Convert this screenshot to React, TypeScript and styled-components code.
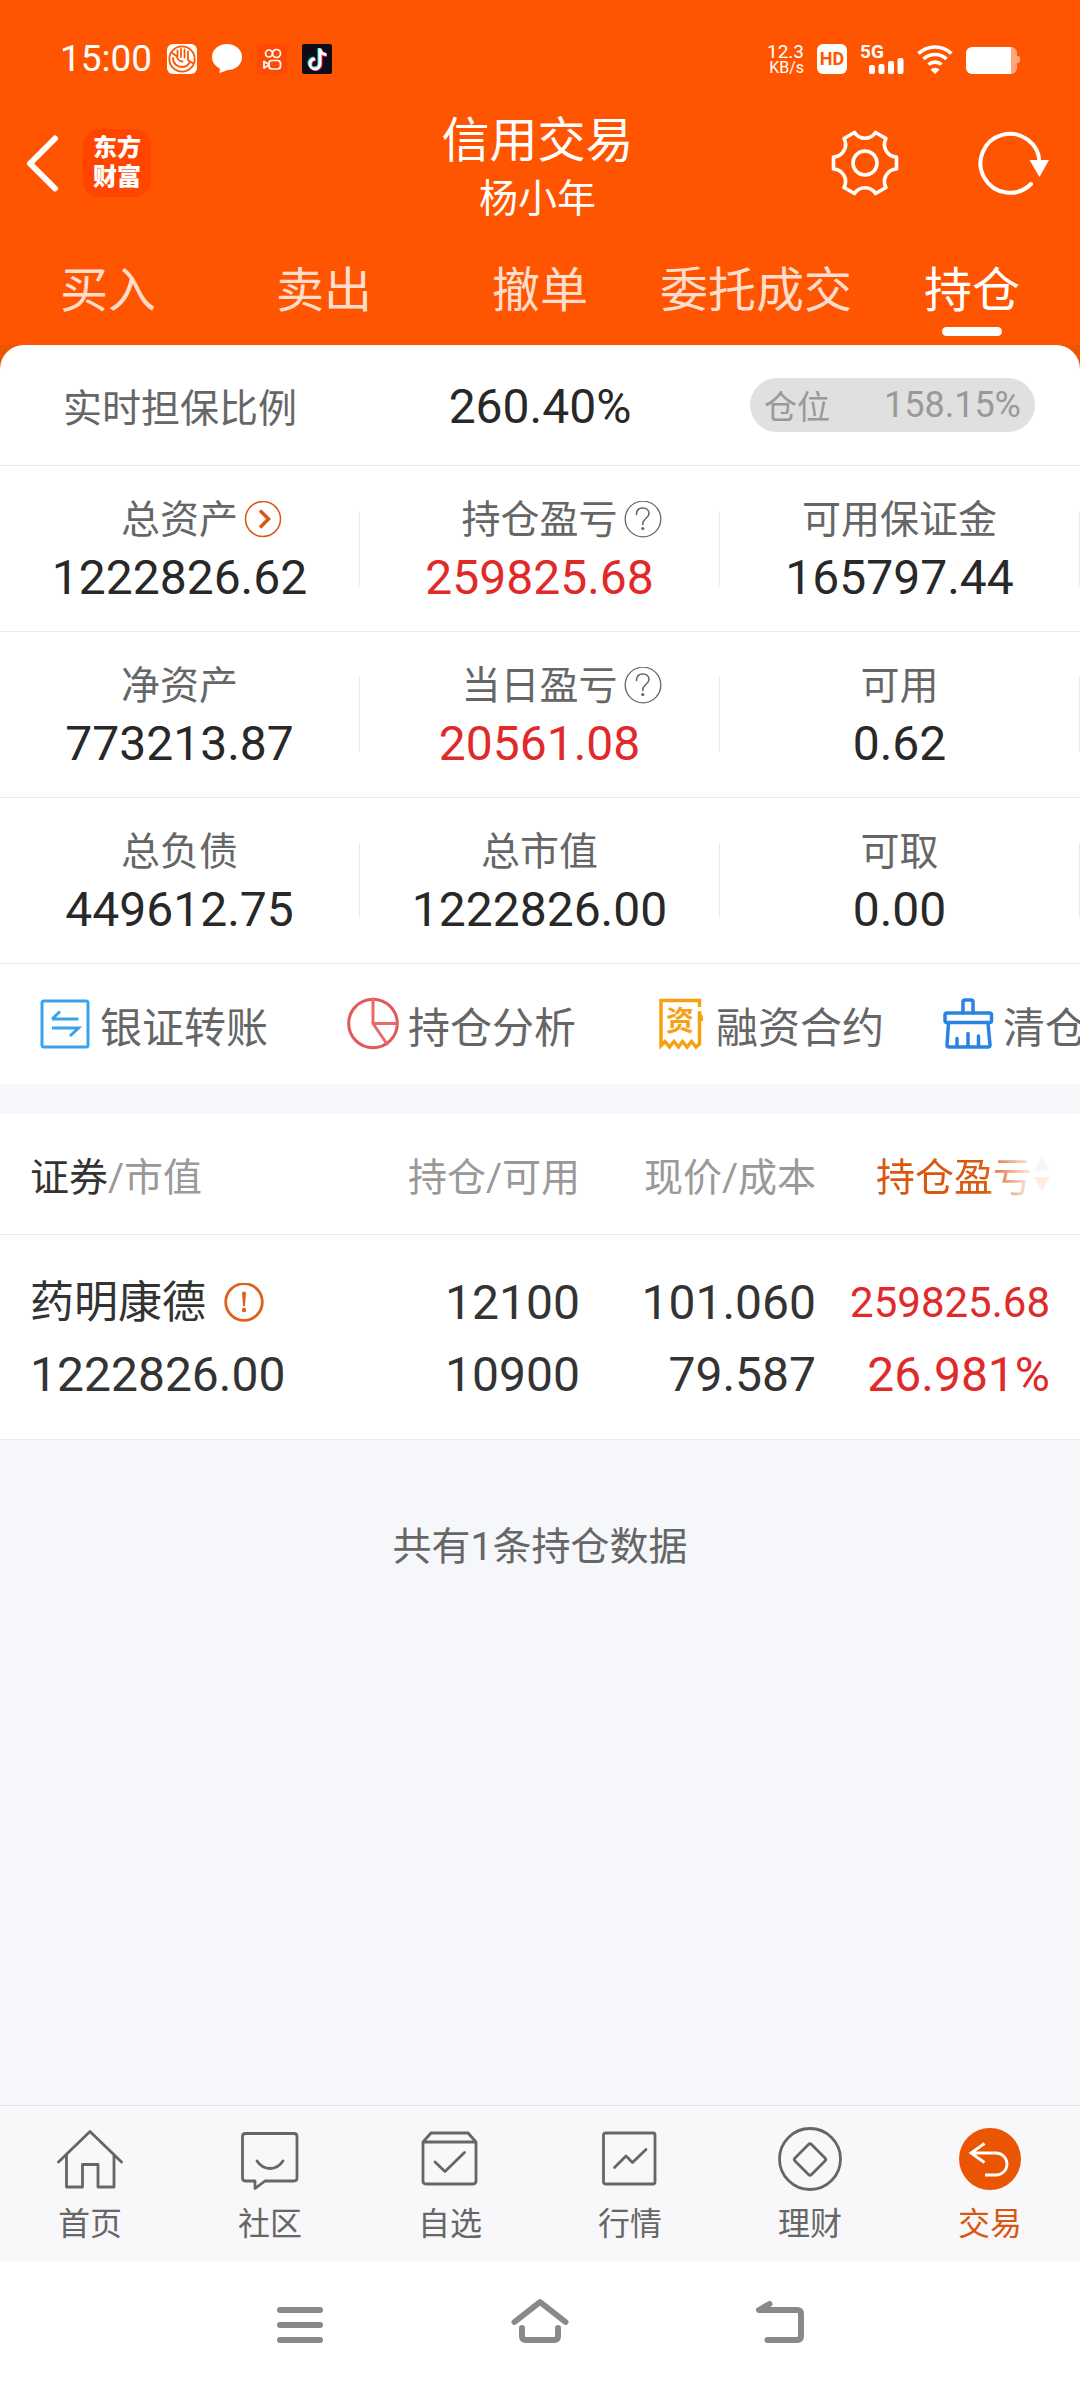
import React from "react";
import styled, { createGlobalStyle } from "styled-components";

const color = {
  brand: "#ff5500",
  brandDeep: "#ea5504",
  accent: "#d9580f",
  rise: "#e02a2a",
  ink: "#282828",
  text: "#333333",
  label: "#666666",
  muted: "#999999",
  line: "#ebebeb",
  page: "#f6f7fa",
};

const GlobalStyle = createGlobalStyle`
  * { box-sizing: border-box; }
  body {
    margin: 0;
    background: ${color.page};
    font-family: Roboto, "Noto Sans CJK SC", sans-serif;
    color: ${color.text};
  }
  button { margin: 0; padding: 0; border: 0; background: none; font: inherit; color: inherit; cursor: pointer; }
  svg { display: block; flex: none; }
`;

const Page = styled.div`
  min-height: 100vh;
  display: flex;
  flex-direction: column;
  overflow-x: hidden;
`;

/* ---------- status bar and header ---------- */

const Header = styled.header`
  background: ${color.brand};
  color: #fff;
`;

const StatusBar = styled.div`
  display: flex;
  justify-content: space-between;
  align-items: center;
  padding: 28px 60px 0;
  height: 90px;
`;

const StatusGroup = styled.div<{ $gap: number }>`
  display: flex;
  align-items: center;
  gap: ${(p) => p.$gap}px;
`;

const Clock = styled.span`
  font-size: 37px;
  line-height: 62px;
`;

const NetSpeed = styled.span`
  display: flex;
  flex-direction: column;
  align-items: flex-end;
  font-size: 19px;
  line-height: 17px;
  small {
    font-size: 16px;
    line-height: 16px;
  }
`;

const HdBadge = styled.span`
  width: 30px;
  height: 30px;
  border-radius: 6px;
  background: #fff;
  color: ${color.brand};
  font-size: 18px;
  line-height: 30px;
  font-weight: 700;
  text-align: center;
`;

const TitleRow = styled.div`
  display: grid;
  grid-template-columns: 1fr auto 1fr;
  align-items: center;
  height: 146px;
  padding: 0 28px 0 23px;
`;

const TitleSide = styled.div<{ $end?: boolean }>`
  display: flex;
  align-items: center;
  justify-content: ${(p) => (p.$end ? "flex-end" : "flex-start")};
  gap: ${(p) => (p.$end ? 77 : 20)}px;
`;

const AppLogo = styled.span`
  width: 68px;
  height: 68px;
  padding: 5px 0;
  border-radius: 16px;
  background: #ff4500;
  font-size: 24px;
  line-height: 29px;
  font-weight: 900;
  text-align: center;
`;

const Title = styled.div`
  align-self: end;
  padding-bottom: 8px;
  text-align: center;
  line-height: 58px;
`;

const TitleText = styled.h1`
  margin: 0;
  font-size: 48px;
  font-weight: 400;
  line-height: 58px;
`;

const TitleName = styled.div`
  font-size: 39px;
`;

const Tabs = styled.nav`
  display: flex;
`;

const Tab = styled.button<{ $active?: boolean }>`
  flex: 1;
  display: flex;
  flex-direction: column;
  align-items: center;
  gap: 6px;
  padding: 25px 0 9px;
  font-size: 48px;
  line-height: 60px;
  white-space: nowrap;
  color: ${(p) => (p.$active ? "#fff" : "#ffddcc")};
  &::after {
    content: "";
    width: 60px;
    height: 9px;
    border-radius: 5px;
    background: ${(p) => (p.$active ? "#fff" : "transparent")};
  }
`;

/* ---------- account summary ---------- */

const SheetBack = styled.section`
  background: ${color.brandDeep};
`;

const Sheet = styled.div`
  background: #fff;
  border-radius: 24px 24px 0 0;
`;

const RatioRow = styled.div`
  display: grid;
  grid-template-columns: 1fr auto 1fr;
  align-items: center;
  height: 121px;
  padding: 0 45px 0 63px;
  border-bottom: 1px solid ${color.line};
`;

const RatioLabel = styled.span`
  font-size: 39px;
  color: ${color.label};
`;

const RatioValue = styled.span`
  padding: 2px 18px 0 0;
  font-size: 48px;
  color: ${color.ink};
`;

const PositionPill = styled.span`
  justify-self: end;
  display: flex;
  justify-content: space-between;
  align-items: center;
  width: 285px;
  height: 54px;
  padding: 0 14px;
  border-radius: 27px;
  background: #e0e0e0;
  color: ${color.muted};
  font-size: 33px;
  b {
    font-size: 36px;
    font-weight: 400;
  }
`;

const StatRow = styled.dl`
  display: grid;
  grid-template-columns: repeat(3, 1fr);
  margin: 0;
  padding: 45px 0;
  border-bottom: 1px solid ${color.line};
`;

const Stat = styled.div`
  height: 75px;
  border-right: 1px solid ${color.line};
  display: flex;
  flex-direction: column;
  justify-content: center;
  text-align: center;
`;

const StatLabel = styled.dt`
  display: grid;
  grid-template-columns: 1fr auto 1fr;
  align-items: center;
  column-gap: 6px;
  font-size: 39px;
  line-height: 58px;
  color: ${color.label};
  span {
    grid-column: 2;
  }
`;

const StatValue = styled.dd<{ $rise?: boolean }>`
  margin: 0;
  font-size: 48px;
  line-height: 58px;
  color: ${(p) => (p.$rise ? color.rise : color.ink)};
`;

const Actions = styled.div`
  display: flex;
  gap: 57px;
  height: 120px;
  padding-left: 38px;
  overflow: hidden;
`;

const Action = styled.button<{ $wide?: boolean }>`
  flex: none;
  display: flex;
  align-items: center;
  gap: 8px;
  width: ${(p) => (p.$wide ? "251px" : "auto")};
  font-size: 42px;
  color: ${color.label};
  white-space: nowrap;
`;

/* ---------- holdings ---------- */

const Holdings = styled.table`
  width: 100%;
  margin-top: 30px;
  border-collapse: collapse;
  table-layout: fixed;
  background: #fff;
`;

const Col = styled.col<{ $width?: number }>`
  width: ${(p) => (p.$width ? `${p.$width}px` : "auto")};
`;

const HeadCell = styled.th`
  height: 120px;
  padding: 0;
  border-bottom: 1px solid ${color.line};
  font-size: 39px;
  font-weight: 400;
  text-align: right;
  color: ${color.muted};
  white-space: nowrap;
  &:first-child {
    padding-left: 30px;
    text-align: left;
  }
  &:last-child {
    padding-right: 30px;
  }
  em {
    font-style: normal;
    color: ${color.text};
  }
`;

const SortButton = styled.button`
  display: inline-flex;
  align-items: center;
  gap: 2px;
  color: ${color.accent};
  mask-image: linear-gradient(to right, #000 62%, rgba(0, 0, 0, 0.15) 88%, rgba(0, 0, 0, 0.12));
`;

const Cell = styled.td<{ $rise?: boolean }>`
  padding: 32px 0 28px;
  border-bottom: 1px solid ${color.line};
  font-size: 48px;
  line-height: 72px;
  text-align: right;
  white-space: nowrap;
  color: ${(p) => (p.$rise ? color.rise : color.text)};
  &:first-child {
    padding-left: 30px;
    text-align: left;
  }
  &:last-child {
    padding-right: 30px;
  }
`;

const NameLine = styled.div`
  display: flex;
  align-items: center;
  font-size: 44px;
  gap: 18px;
`;

const NumberLine = styled.div<{ $small?: boolean }>`
  font-size: ${(p) => (p.$small ? 42 : 48)}px;
`;

const Summary = styled.p`
  flex: 1;
  margin: 0;
  padding-top: 78px;
  font-size: 39px;
  line-height: 58px;
  text-align: center;
  color: ${color.label};
`;

/* ---------- bottom bars ---------- */

const BottomNav = styled.nav`
  display: flex;
  border-top: 1px solid #dfe2e4;
  background: #f8f8fa;
`;

const NavItem = styled.button<{ $active?: boolean }>`
  flex: 1;
  display: flex;
  flex-direction: column;
  align-items: center;
  gap: 8px;
  padding: 20px 0 14px;
  font-size: 32px;
  line-height: 48px;
  color: ${(p) => (p.$active ? color.accent : color.label)};
`;

const SystemBar = styled.div`
  display: flex;
  justify-content: center;
  align-items: center;
  gap: 180px;
  height: 126px;
  background: #fff;
`;

/* ---------- drawings ---------- */

const stroke = (c: string, w: number) => ({
  fill: "none",
  stroke: c,
  strokeWidth: w,
  strokeLinecap: "round" as const,
  strokeLinejoin: "round" as const,
});

const HandIcon = () => (
  <svg width="30" height="30" viewBox="0 0 30 30">
    <rect width="30" height="30" rx="6" fill="#fff" />
    <circle cx="15" cy="15" r="12.7" {...stroke(color.brand, 1.8)} />
    <path d="M4.500 8.500L10 12.500M10.500 6.500v6M14 5v8M17.500 5.500v8M21 7.500v8.500l4.500 3M6 14c0 6 4.500 9 9 9 3.500 0 6-1.500 7.500-4.500M10 13c1 3 3 4.500 5.500 4.500" {...stroke(color.brand, 1.8)} />
  </svg>
);

const BubbleIcon = () => (
  <svg width="30" height="30" viewBox="0 0 30 30">
    <path d="M15 0c8.500 0 15 5.600 15 13s-6 13-14 13L7.500 29c0-2 .4-3.500.4-4.500C3 22 0 18 0 13 0 5.600 6.500 0 15 0Z" fill="#fff" />
  </svg>
);

const VideoIcon = () => (
  <svg width="30" height="30" viewBox="0 0 30 30">
    <rect width="30" height="30" rx="2" fill="#ff4906" />
    <g {...stroke("#fff", 1.7)}>
      <circle cx="12" cy="9.500" r="3.500" />
      <circle cx="19.500" cy="9.500" r="4" />
      <rect x="12" y="16.500" width="11.500" height="8.500" rx="3" />
      <path d="M12 20.500l-5-3v6.500l5-3" />
    </g>
  </svg>
);

const NoteIcon = () => (
  <svg width="30" height="30" viewBox="0 0 30 30">
    <rect width="30" height="30" rx="2" fill="#0d0b18" />
    <g fill="none" strokeWidth="3">
      <path d="M17 4v15a5 5 0 1 1-5-5M17 4.500c.5 3.500 3 5.500 6.500 5.500" stroke="#25e8e4" />
      <path d="M19 5.500V20.500a5 5 0 1 1-5-5M19 6c.5 3.500 3 5.500 6 5.500" stroke="#f8294f" />
      <path d="M18 4.500V20a5 5 0 1 1-5-5M18 5c.5 3.500 3 5.500 6.500 5.500" stroke="#fff" />
    </g>
  </svg>
);

const SignalIcon = () => (
  <svg width="44" height="44" viewBox="0 -7 44 44">
    <text x="0" y="14" fontSize="19" fontWeight="700" fill="#fff">5G</text>
    <g fill="#fff">
      <rect x="9" y="21" width="6" height="9" rx="2" />
      <rect x="18.500" y="20" width="6" height="10" rx="2" />
      <rect x="28" y="17" width="6" height="13" rx="2" />
      <rect x="37.500" y="14" width="6" height="16" rx="2" />
    </g>
  </svg>
);

const WifiIcon = () => (
  <svg width="36" height="30" viewBox="0 0 36 30">
    <path d="M1.500 9.500a24 24 0 0 1 33 0M6.500 15a17 17 0 0 1 23 0M11.500 20.500a10 10 0 0 1 13 0" fill="none" stroke="#fff" strokeWidth="3.600" />
    <path d="M18 30l-4.500-4.500a6.500 6.500 0 0 1 9 0Z" fill="#fff" />
  </svg>
);

const BatteryIcon = () => (
  <svg width="54" height="30" viewBox="0 0 54 30">
    <path d="M44 3h1a6 6 0 0 1 6 6v3h1q2 0 2 2v3q0 2-2 2h-1v5a6 6 0 0 1-6 6h-1Z" fill="#ffa680" />
    <path d="M6 3h39v27H6a6 6 0 0 1-6-6V9a6 6 0 0 1 6-6Z" fill="#fff" />
  </svg>
);

const BackIcon = () => (
  <svg width="40" height="60" viewBox="0 0 40 60">
    <path d="M32 5.500L7 30.500 32 55.500" {...stroke("#fff", 6)} />
  </svg>
);

const GearIcon = () => (
  <svg width="70" height="70" viewBox="-35 -35 70 70">
    <g {...stroke("#fff", 3.600)}>
      <path d="M-10.500-30.500A12.500 12.500 0 0 0 10.500-30.500L21-24.500A12.500 12.500 0 0 0 31.500-6V6A12.500 12.500 0 0 0 21 24.500L10.500 30.500A12.500 12.500 0 0 0-10.500 30.500L-21 24.500A12.500 12.500 0 0 0-31.500 6V-6A12.500 12.500 0 0 0-21-24.500Z" />
      <circle r="12" />
    </g>
  </svg>
);

const RefreshIcon = () => (
  <svg width="75" height="70" viewBox="0 0 75 70">
    <path d="M54 56A29.500 29.500 0 1 1 62.500 35" {...stroke("#fff", 4)} />
    <path d="M52.500 32H72L62.500 49Z" fill="#fff" />
  </svg>
);

const MoreIcon = () => (
  <svg width="38" height="38" viewBox="0 0 38 38">
    <circle cx="19" cy="18" r="17.500" fill="none" stroke={color.accent} strokeWidth="1.500" />
    <path d="M16 9.500L24.500 18 16 26.500" fill="none" stroke={color.accent} strokeWidth="3.500" />
  </svg>
);

const HelpIcon = () => (
  <svg width="38" height="38" viewBox="0 0 38 38">
    <circle cx="19" cy="18" r="17.800" fill="none" stroke={color.label} strokeWidth="1.300" />
    <path d="M12.500 13.500c0-4 2.500-6.500 6.300-6.500s6.200 2.300 6.200 5.600c0 4.400-6.200 5-6.200 10v1" {...stroke(color.label, 1.600)} />
    <circle cx="18.800" cy="27.500" r="1.600" fill={color.label} />
  </svg>
);

const TransferIcon = () => (
  <svg width="54" height="54" viewBox="0 0 54 54">
    <rect x="4" y="4" width="46" height="46" rx="2" {...stroke("#3aa2ea", 3)} />
    <path d="M14 22H40.500M14 22L22 14.500M14 31H40.500L32 39" fill="none" stroke="#3aa2ea" strokeWidth="3" />
  </svg>
);

const PieIcon = () => (
  <svg width="54" height="54" viewBox="0 0 54 54">
    <circle cx="27" cy="26.500" r="24.300" {...stroke("#e2585b", 3)} />
    <path d="M27 2V26.500H51M27 26.500L41 47" {...stroke("#e9696b", 3)} />
  </svg>
);

const ContractIcon = () => (
  <svg width="54" height="54" viewBox="0 0 54 54">
    <g fill="none" stroke="#f5a112" strokeWidth="3.500">
      <path d="M45.500 10V3.500H7V48.500L11 44.500 15.500 50 20 44.500 24.500 50 28.500 44.500 33 50 37.500 44.500 42 50 45.500 47V14" />
      <path d="M45 15L48 20V24" strokeWidth="2" />
    </g>
    <text x="26" y="34" fontSize="28" fontWeight="700" textAnchor="middle" fill="#f5a112">资</text>
  </svg>
);

const BrushIcon = () => (
  <svg width="54" height="54" viewBox="0 0 54 54">
    <g {...stroke("#2a83e4", 3.500)}>
      <path d="M22 16V5q0-2 2-2h6q2 0 2 2V16" />
      <rect x="4" y="16" width="46.500" height="9.500" rx="2" />
      <path d="M7.500 26L6 48q0 2 2 2H47q2 0 2-2L47 26M16 50V41.500M27 50V36.500M37.500 50V39" />
    </g>
  </svg>
);

const SortIcon = () => (
  <svg width="16" height="36" viewBox="0 0 16 36">
    <path d="M8 1L16 15H0Z" fill="#bdbdc4" />
    <path d="M8 35L0 21H16Z" fill="#ff7a3d" />
  </svg>
);

const AlertIcon = () => (
  <svg width="40" height="40" viewBox="0 0 40 40">
    <circle cx="20" cy="19" r="18.300" fill="none" stroke="#e0601a" strokeWidth="2.800" />
    <path d="M18 9.500q2-2 4 0L21 23H19Z" fill="#e0601a" />
    <circle cx="20" cy="27" r="2.200" fill="#e0601a" />
  </svg>
);

const NavIcon = ({ children }: { children: React.ReactNode }) => (
  <svg width="66" height="66" viewBox="0 0 66 66">
    <g {...stroke(color.label, 2.800)}>{children}</g>
  </svg>
);

const SysIcon = ({ children }: { children: React.ReactNode }) => (
  <svg width="60" height="60" viewBox="0 0 60 60">
    <g {...stroke("#898989", 6)}>{children}</g>
  </svg>
);

/* ---------- data ---------- */

type StatItem = { label: string; value: string; rise?: boolean; icon?: React.ReactNode };

const stats: StatItem[][] = [
  [
    { label: "总资产", value: "1222826.62", icon: <MoreIcon /> },
    { label: "持仓盈亏", value: "259825.68", rise: true, icon: <HelpIcon /> },
    { label: "可用保证金", value: "165797.44" },
  ],
  [
    { label: "净资产", value: "773213.87" },
    { label: "当日盈亏", value: "20561.08", rise: true, icon: <HelpIcon /> },
    { label: "可用", value: "0.62" },
  ],
  [
    { label: "总负债", value: "449612.75" },
    { label: "总市值", value: "1222826.00" },
    { label: "可取", value: "0.00" },
  ],
];

const tabs = ["买入", "卖出", "撤单", "委托成交", "持仓"];

const navItems: { label: string; icon: React.ReactNode; active?: boolean }[] = [
  { label: "首页", icon: <NavIcon><path d="M1.500 36L33 5.500 64.500 36M9.500 29V61H25.500V38.500H41V61H57V29" /></NavIcon> },
  {
    label: "社区",
    icon: (
      <NavIcon>
        <path d="M8.500 7.500H57q3 0 3 3V52q0 3-3 3H28L18 62.500V55H8.500q-3 0-3-3V10.500q0-3 3-3Z" />
        <path d="M20 35q5 7.500 13 7.500T46 35" />
      </NavIcon>
    ),
  },
  {
    label: "自选",
    icon: (
      <NavIcon>
        <path d="M6 16L14 7H51L59 16V55q0 3-3 3H9q-3 0-3-3ZM6 16H59M18 36L28 45.500 47.500 26.500" />
      </NavIcon>
    ),
  },
  {
    label: "行情",
    icon: (
      <NavIcon>
        <rect x="6.500" y="7" width="51.500" height="51" rx="2" />
        <path d="M17.500 41.500L29 30 35.500 36.500 49 23.500" />
      </NavIcon>
    ),
  },
  {
    label: "理财",
    icon: (
      <NavIcon>
        <circle cx="33" cy="33" r="30.500" />
        <path d="M31.500 18.500q1.500-1.500 3 0L48 32q1.500 1.500 0 3L34.500 48.500q-1.500 1.500-3 0L18 35q-1.500-1.500 0-3Z" />
      </NavIcon>
    ),
  },
  {
    label: "交易",
    active: true,
    icon: (
      <svg width="66" height="66" viewBox="0 0 66 66">
        <circle cx="33" cy="33" r="31" fill="#ea5504" />
        <path d="M27.500 17.500L14 27 27.500 36.500M14 27H39a11 11 0 0 1 0 22H28" fill="none" stroke="#fff" strokeWidth="2.800" />
      </svg>
    ),
  },
];

export default function App() {
  return (
    <Page>
      <GlobalStyle />
      <Header>
        <StatusBar>
          <StatusGroup $gap={15}>
            <Clock>15:00</Clock>
            <HandIcon />
            <BubbleIcon />
            <VideoIcon />
            <NoteIcon />
          </StatusGroup>
          <StatusGroup $gap={13}>
            <NetSpeed>
              12.3<small>KB/s</small>
            </NetSpeed>
            <HdBadge>HD</HdBadge>
            <SignalIcon />
            <WifiIcon />
            <BatteryIcon />
          </StatusGroup>
        </StatusBar>
        <TitleRow>
          <TitleSide>
            <button aria-label="返回"><BackIcon /></button>
            <AppLogo>东方<br />财富</AppLogo>
          </TitleSide>
          <Title>
            <TitleText>信用交易</TitleText>
            <TitleName>杨小年</TitleName>
          </Title>
          <TitleSide $end>
            <button aria-label="设置"><GearIcon /></button>
            <button aria-label="刷新"><RefreshIcon /></button>
          </TitleSide>
        </TitleRow>
        <Tabs>
          {tabs.map((t) => (
            <Tab key={t} $active={t === "持仓"}>{t}</Tab>
          ))}
        </Tabs>
      </Header>

      <SheetBack>
        <Sheet>
          <RatioRow>
            <RatioLabel>实时担保比例</RatioLabel>
            <RatioValue>260.40%</RatioValue>
            <PositionPill>
              仓位 <b>158.15%</b>
            </PositionPill>
          </RatioRow>
          {stats.map((row) => (
            <StatRow key={row[0].label}>
              {row.map((s) => (
                <Stat key={s.label}>
                  <StatLabel>
                    <span>{s.label}</span>
                    {s.icon}
                  </StatLabel>
                  <StatValue $rise={s.rise}>{s.value}</StatValue>
                </Stat>
              ))}
            </StatRow>
          ))}
          <Actions>
            <Action $wide><TransferIcon />银证转账</Action>
            <Action $wide><PieIcon />持仓分析</Action>
            <Action><ContractIcon />融资合约</Action>
            <Action><BrushIcon />清仓</Action>
          </Actions>
        </Sheet>
      </SheetBack>

      <Holdings>
        <colgroup>
          <Col />
          <Col $width={236} />
          <Col $width={236} />
          <Col $width={264} />
        </colgroup>
        <thead>
          <tr>
            <HeadCell><em>证券</em>/市值</HeadCell>
            <HeadCell>持仓/可用</HeadCell>
            <HeadCell>现价/成本</HeadCell>
            <HeadCell>
              <SortButton>持仓盈亏<SortIcon /></SortButton>
            </HeadCell>
          </tr>
        </thead>
        <tbody>
          <tr>
            <Cell>
              <NameLine>药明康德<AlertIcon /></NameLine>
              <NumberLine>1222826.00</NumberLine>
            </Cell>
            <Cell>
              <NumberLine>12100</NumberLine>
              <NumberLine>10900</NumberLine>
            </Cell>
            <Cell>
              <NumberLine>101.060</NumberLine>
              <NumberLine>79.587</NumberLine>
            </Cell>
            <Cell $rise>
              <NumberLine $small>259825.68</NumberLine>
              <NumberLine>26.981%</NumberLine>
            </Cell>
          </tr>
        </tbody>
      </Holdings>

      <Summary>共有1条持仓数据</Summary>

      <BottomNav>
        {navItems.map((n) => (
          <NavItem key={n.label} $active={n.active}>
            {n.icon}
            {n.label}
          </NavItem>
        ))}
      </BottomNav>
      <SystemBar>
        <button aria-label="最近任务">
          <SysIcon><path d="M10 15H50M10 30H50M10 45H50" /></SysIcon>
        </button>
        <button aria-label="主屏幕">
          <SysIcon><path d="M4.500 27L30 7 55.500 27M12 33V41q0 4 4 4H44q4 0 4-4V33" /></SysIcon>
        </button>
        <button aria-label="返回上一页">
          <SysIcon><path d="M19.500 9L9 15H47q4 0 4 4V41q0 4-4 4H17.500" /></SysIcon>
        </button>
      </SystemBar>
    </Page>
  );
}
